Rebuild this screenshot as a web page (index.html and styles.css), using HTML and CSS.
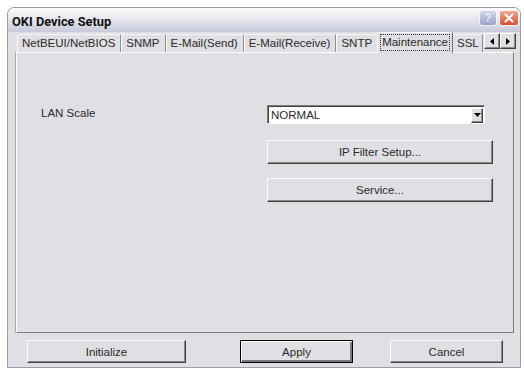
FILE: index.html
```html
<!DOCTYPE html>
<html lang="en">
<head>
    <meta charset="UTF-8">
    <title>OKI Device Setup</title>
    <link rel="stylesheet" href="styles.css">
</head>
<body>

    <div class="window">
        <div class="titlebar">
            <span class="title">OKI Device Setup</span>
            <div class="caption-btns">
                <span class="cap help">?</span>
                <span class="cap close">
                    <svg width="10" height="10" viewBox="0 0 10 10"><path d="M1.5 1.5 L8.5 8.5 M8.5 1.5 L1.5 8.5" stroke="#fff" stroke-width="2" stroke-linecap="round"/></svg>
                </span>
            </div>
        </div>

        <div class="tabstrip">
            <div class="tabs">
                <span class="tab">NetBEUI/NetBIOS</span>
                <span class="tab">SNMP</span>
                <span class="tab">E-Mail(Send)</span>
                <span class="tab">E-Mail(Receive)</span>
                <span class="tab">SNTP</span>
                <span class="tab active"><span class="focus">Maintenance</span></span>
                <span class="tab last">SSL</span>
            </div>
            <div class="tab-arrows">
                <span class="arrow"><svg width="4" height="7" viewBox="0 0 4 7"><path d="M4 0 L0 3.5 L4 7 Z" fill="#000"/></svg></span>
                <span class="arrow"><svg width="4" height="7" viewBox="0 0 4 7"><path d="M0 0 L4 3.5 L0 7 Z" fill="#000"/></svg></span>
            </div>
        </div>

        <div class="panel">
            <span class="label">LAN Scale</span>
            <div class="controls">
                <div class="combo">
                    <span class="combo-value">NORMAL</span>
                    <span class="combo-drop"><svg width="7" height="4" viewBox="0 0 7 4"><path d="M0 0 L7 0 L3.5 4 Z" fill="#000"/></svg></span>
                </div>
                <button class="btn ip-filter">IP Filter Setup...</button>
                <button class="btn service">Service...</button>
            </div>
        </div>

        <div class="footer">
            <button class="btn initialize">Initialize</button>
            <button class="btn apply">Apply</button>
            <button class="btn cancel">Cancel</button>
        </div>
    </div>

</body>
</html>
```

FILE: styles.css
```css
/* Page */
body {
    margin: 0;
    background: #fff;
    font-family: "Liberation Sans", Arial, sans-serif;
    font-size: 11.5px;
    color: #2a2a2a;
}

/* Dialog window */
.window {
    margin: 7px 0 0 7px;
    width: 514px;
    height: 361px;
    box-sizing: border-box;
    border: 1px solid #9c9ca8;
    border-radius: 7px 7px 0 0;
    background: #e0dfe3;
    display: flex;
    flex-direction: column;
    overflow: hidden;
}

/* Title bar */
.titlebar {
    flex: none;
    height: 24px;
    display: flex;
    justify-content: space-between;
    padding: 0 1px 0 4px;
    background: linear-gradient(to bottom, #fdfdfe 0%, #ececf2 35%, #dadae6 70%, #c6c8d8 100%);
}

.title {
    align-self: center;
    margin-top: 3px;
    font-family: "Liberation Sans Narrow", Roboto, sans-serif;
    font-weight: bold;
    font-size: 12.8px;
    color: #111;
}

.caption-btns {
    display: flex;
    margin-top: 2px;
}

.cap {
    height: 16px;
    box-sizing: border-box;
    border: 1px solid #f4f4f8;
    border-radius: 3px;
    display: flex;
    align-items: center;
    justify-content: center;
    margin-left: 2px;
}

.help {
    width: 18px;
    background: linear-gradient(to bottom, #d4d9ee, #97a2cc);
    color: #fff;
    font-weight: bold;
    font-size: 12px;
    text-shadow: 0 0 1px #55608a;
}

.close {
    width: 20px;
    background: linear-gradient(to bottom, #efa994, #d5502f);
}

/* Tab strip */
.tabstrip {
    flex: none;
    height: 20px;
    display: flex;
    padding: 0 4px 0 9px;
}

.tabs {
    flex: 1;
    height: 21px;
    display: flex;
    align-items: flex-start;
    overflow: hidden;
    position: relative;
    z-index: 2;
}

.tab {
    flex: none;
    height: 18px;
    margin-top: 2px;
    box-sizing: border-box;
    padding: 0 5px 0 4px;
    line-height: 17px;
    white-space: nowrap;
    border-left: 1px solid #fff;
    border-top: 1px solid #f6f6f8;
    border-right: 1px solid #8e8e96;
}

.tab.active {
    height: 21px;
    margin: 0 -1px 0 -1px;
    padding: 1px 2px 0 2px;
    line-height: 15px;
    background: #e0dfe3;
    border-right-color: #6e6e76;
    position: relative;
    z-index: 1;
}

.tab.last {
    padding-right: 3px;
}

.focus {
    display: inline-block;
    border: 1px dotted #333;
    padding: 0 1px;
}

.tab-arrows {
    display: flex;
    margin-top: 1px;
}

.arrow {
    width: 16px;
    height: 16px;
    box-sizing: border-box;
    border: 1px solid;
    border-color: #fff #404040 #404040 #fff;
    box-shadow: inset -1px -1px #8a8a8a;
    display: flex;
    align-items: center;
    justify-content: center;
}

/* Tab page */
.panel {
    flex: none;
    height: 281px;
    margin: 0 6px 0 8px;
    box-sizing: border-box;
    border: 1px solid;
    border-color: #fff #7c7c84 #7c7c84 #fff;
    box-shadow: -1px 0 0 #a8a8b0;
    padding: 52px 0 0 24px;
    display: grid;
    grid-template-columns: 226px 226px;
    align-items: start;
}

.label {
    line-height: 15px;
    margin-top: 1px;
}

.controls {
    display: flex;
    flex-direction: column;
}

.combo {
    width: 218px;
    height: 19px;
    box-sizing: border-box;
    border: 1px solid;
    border-color: #808080 #fff #fff #808080;
    box-shadow: inset 1px 1px #404040;
    background: #fff;
    display: flex;
    align-items: center;
    padding: 1px 1px 0 3px;
}

.combo-value {
    flex: 1;
}

.combo-drop {
    width: 12px;
    height: 15px;
    box-sizing: border-box;
    border: 1px solid;
    border-color: #fff #404040 #404040 #fff;
    box-shadow: inset -1px -1px #8a8a8a;
    background: #e0dfe3;
    display: flex;
    align-items: center;
    justify-content: center;
}

/* Push buttons */
.btn {
    height: 24px;
    box-sizing: border-box;
    padding: 0;
    border: 1px solid;
    border-color: #fff #404040 #404040 #fff;
    box-shadow: inset -1px -1px #8a8a8a;
    background: #e0dfe3;
    font: inherit;
    color: #2a2a2a;
}

.ip-filter {
    margin-top: 16px;
}

.service {
    margin-top: 14px;
}

/* Footer buttons */
.footer {
    display: flex;
    padding: 7px 0 0 19px;
}

.footer .btn {
    height: 23px;
}

.initialize {
    width: 159px;
}

.apply {
    width: 113px;
    margin-left: 54px;
    border-color: #000;
    box-shadow: inset 1px 1px #fff, inset -2px -2px #7a7a7a;
}

.cancel {
    width: 113px;
    margin-left: 37px;
}
```
